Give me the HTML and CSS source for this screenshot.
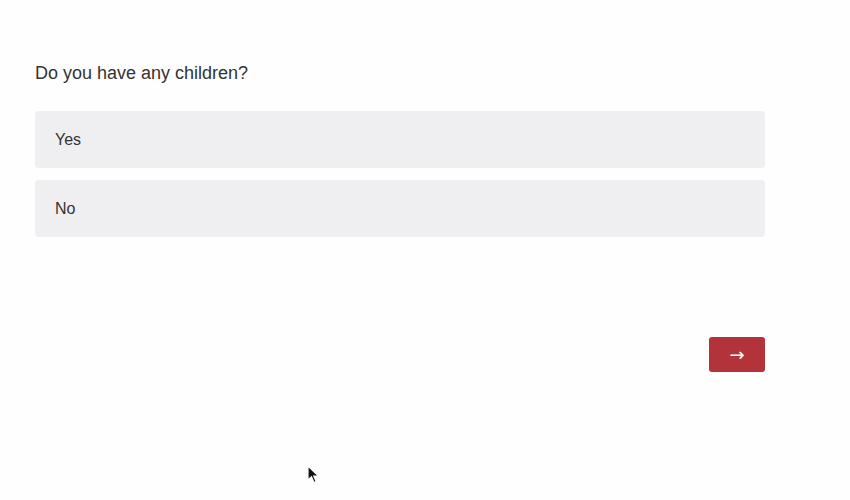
FILE: index.html
```html
<!DOCTYPE html>
<html>
<head>
<meta charset="utf-8">
<link rel="stylesheet" href="styles.css">
</head>
<body>
<div class="form">
  <h1 class="question">Do you have any children?</h1>
  <div class="options">
    <div class="option">Yes</div>
    <div class="option">No</div>
  </div>
  <div class="actions">
    <button class="next">→</button>
  </div>
</div>
<svg class="cursor" width="14" height="20" viewBox="0 0 14 20"><path d="M1 1 L1 15 L4.5 11.8 L7 17.5 L9.2 16.5 L6.8 11 L11.5 11 Z" fill="#111" stroke="#fff" stroke-width="1.2"/></svg>
</body>
</html>
```
FILE: styles.css
```css
html, body {
  margin: 0;
  padding: 0;
  background: #fefefe;
}
body {
  font-family: "Liberation Sans", Arial, sans-serif;
  color: #333;
  width: 850px;
  height: 500px;
  position: relative;
  overflow: hidden;
}
.form {
  width: 730px;
  padding: 62px 0 0 35px;
}
.question {
  font-size: 18px;
  font-weight: normal;
  line-height: 22px;
  margin: 0 0 27px 0;
  color: #333;
}
.options {
  display: flex;
  flex-direction: column;
  gap: 12px;
}
.option {
  background: #efeff1;
  border-radius: 4px;
  height: 57px;
  display: flex;
  align-items: center;
  padding-left: 20px;
  font-size: 16px;
  color: #333;
}
.actions {
  display: flex;
  justify-content: flex-end;
  margin-top: 100px;
}
.next {
  width: 56px;
  height: 35px;
  border: none;
  border-radius: 3px;
  background: #b2333a;
  color: #fff;
  font-size: 18px;
  font-family: "DejaVu Sans", sans-serif;
  padding: 0;
  line-height: 35px;
}
.cursor {
  position: absolute;
  left: 307px;
  top: 465px;
}
```
